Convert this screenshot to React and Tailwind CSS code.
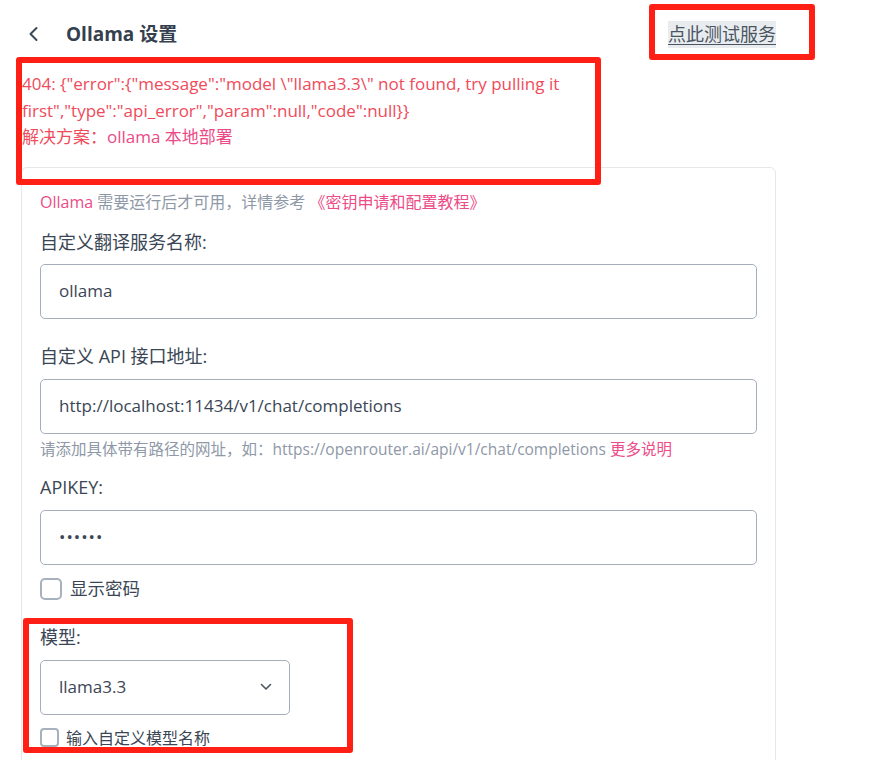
import React from "react";

const FONT = { fontFamily: '"Open Sans", "Noto Sans CJK SC", sans-serif' };

function Chevron() {
  return (
    <svg width="14" height="16" viewBox="0 0 14 16" fill="none">
      <path d="M9.5 2 L3.5 8 L9.5 14" stroke="#3b4856" strokeWidth="2" strokeLinecap="round" strokeLinejoin="round" />
    </svg>
  );
}

function Checkbox({ size }) {
  return (
    <span
      className={
        size === "lg"
          ? "inline-block w-[22px] h-[22px] rounded-[5px] border-2 border-[#a7b1bd] bg-white"
          : "inline-block w-[19px] h-[19px] rounded-[4px] border-2 border-[#a7b1bd] bg-white"
      }
    />
  );
}

export default function App() {
  return (
    <div className="relative w-[880px] h-[760px] overflow-hidden bg-white text-[#3a4655]" style={FONT}>
      <div className="ml-[21px] w-[755px] pt-[14px]">
        {/* header */}
        <div className="flex items-center justify-between h-[40px]">
          <div className="flex items-center">
            <span className="ml-[6px] mr-[25px] flex items-center">
              <Chevron />
            </span>
            <span className="text-[19px] font-bold text-[#34404e]">Ollama 设置</span>
          </div>
          <span className="text-[18px] leading-[27px] bg-[#e9ecef] text-[#4a5562] underline underline-offset-[3px]">
            点此测试服务
          </span>
        </div>

        {/* error */}
        <div className="mt-[17px] pl-[1px] text-[17px] leading-[26.5px] text-[#ef4b5b] w-[578px]">
          <div>404: {'{"error":{"message":"model \\"llama3.3\\" not found, try pulling it first","type":"api_error","param":null,"code":null}}'}</div>
          <div>
            解决方案：<span className="text-[#eb4a86]">ollama 本地部署</span>
          </div>
        </div>

        {/* card */}
        <div className="mt-[16px] border border-[#e5e7eb] rounded-[6px] px-[18px] pt-[23px] h-[700px]">
          <div className="text-[16px] leading-[22px] text-[#8e98a7]">
            <span className="text-[#ec4c88]">Ollama</span> 需要运行后才可用，详情参考{" "}
            <span className="text-[#ec4c88]">《密钥申请和配置教程》</span>
          </div>

          <div className="mt-[17px] text-[18px] leading-[24px]">自定义翻译服务名称:</div>
          <div className="mt-[10px] h-[55px] border border-[#a4aebb] rounded-[5px] flex items-center px-[18px] text-[17px] text-[#3a4655]">
            ollama
          </div>

          <div className="mt-[25px] text-[18px] leading-[24px]">自定义 API 接口地址:</div>
          <div className="mt-[11px] h-[55px] border border-[#a4aebb] rounded-[5px] flex items-center px-[18px] text-[17px] text-[#3a4655]">
            http://localhost:11434/v1/chat/completions
          </div>
          <div className="mt-[4px] text-[15.5px] leading-[22px] text-[#8e98a7]">
            请添加具体带有路径的网址，如：https://openrouter.ai/api/v1/chat/completions{" "}
            <span className="text-[#ec4c88]">更多说明</span>
          </div>

          <div className="mt-[15px] text-[18px] leading-[24px]">APIKEY:</div>
          <div className="mt-[11px] h-[55px] border border-[#a4aebb] rounded-[5px] flex items-center px-[18px] text-[17px] text-[#3a4655] tracking-[1px]">
            ••••••
          </div>

          <div className="mt-[12px] flex items-center gap-[8px] h-[24px]">
            <Checkbox size="lg" />
            <span className="text-[17.5px]">显示密码</span>
          </div>

          <div className="mt-[24px] text-[18px] leading-[24px]">模型:</div>
          <div className="mt-[11px] w-[250px] h-[55px] border border-[#a4aebb] rounded-[5px] flex items-center justify-between pl-[18px] pr-[17px] text-[17px] text-[#3a4655]">
            <span>llama3.3</span>
            <svg width="12" height="8" viewBox="0 0 12 8" fill="none">
              <path d="M1.5 1.5 L6 6 L10.5 1.5" stroke="#4a5562" strokeWidth="1.6" strokeLinecap="round" strokeLinejoin="round" />
            </svg>
          </div>
          <div className="mt-[12px] flex items-center gap-[7px]">
            <Checkbox size="sm" />
            <span className="text-[16px] leading-[22px]">输入自定义模型名称</span>
          </div>
        </div>
      </div>

      {/* annotation boxes */}
      <div className="absolute left-[16px] top-[57px] w-[585px] h-[128px] border-[6px] border-[#ff1f14] rounded-[3px]" />
      <div className="absolute left-[649px] top-[4px] w-[166px] h-[56px] border-[6px] border-[#ff1f14] rounded-[3px]" />
      <div className="absolute left-[23px] top-[618px] w-[330px] h-[135px] border-[6px] border-[#ff1f14] rounded-[3px]" />
    </div>
  );
}
